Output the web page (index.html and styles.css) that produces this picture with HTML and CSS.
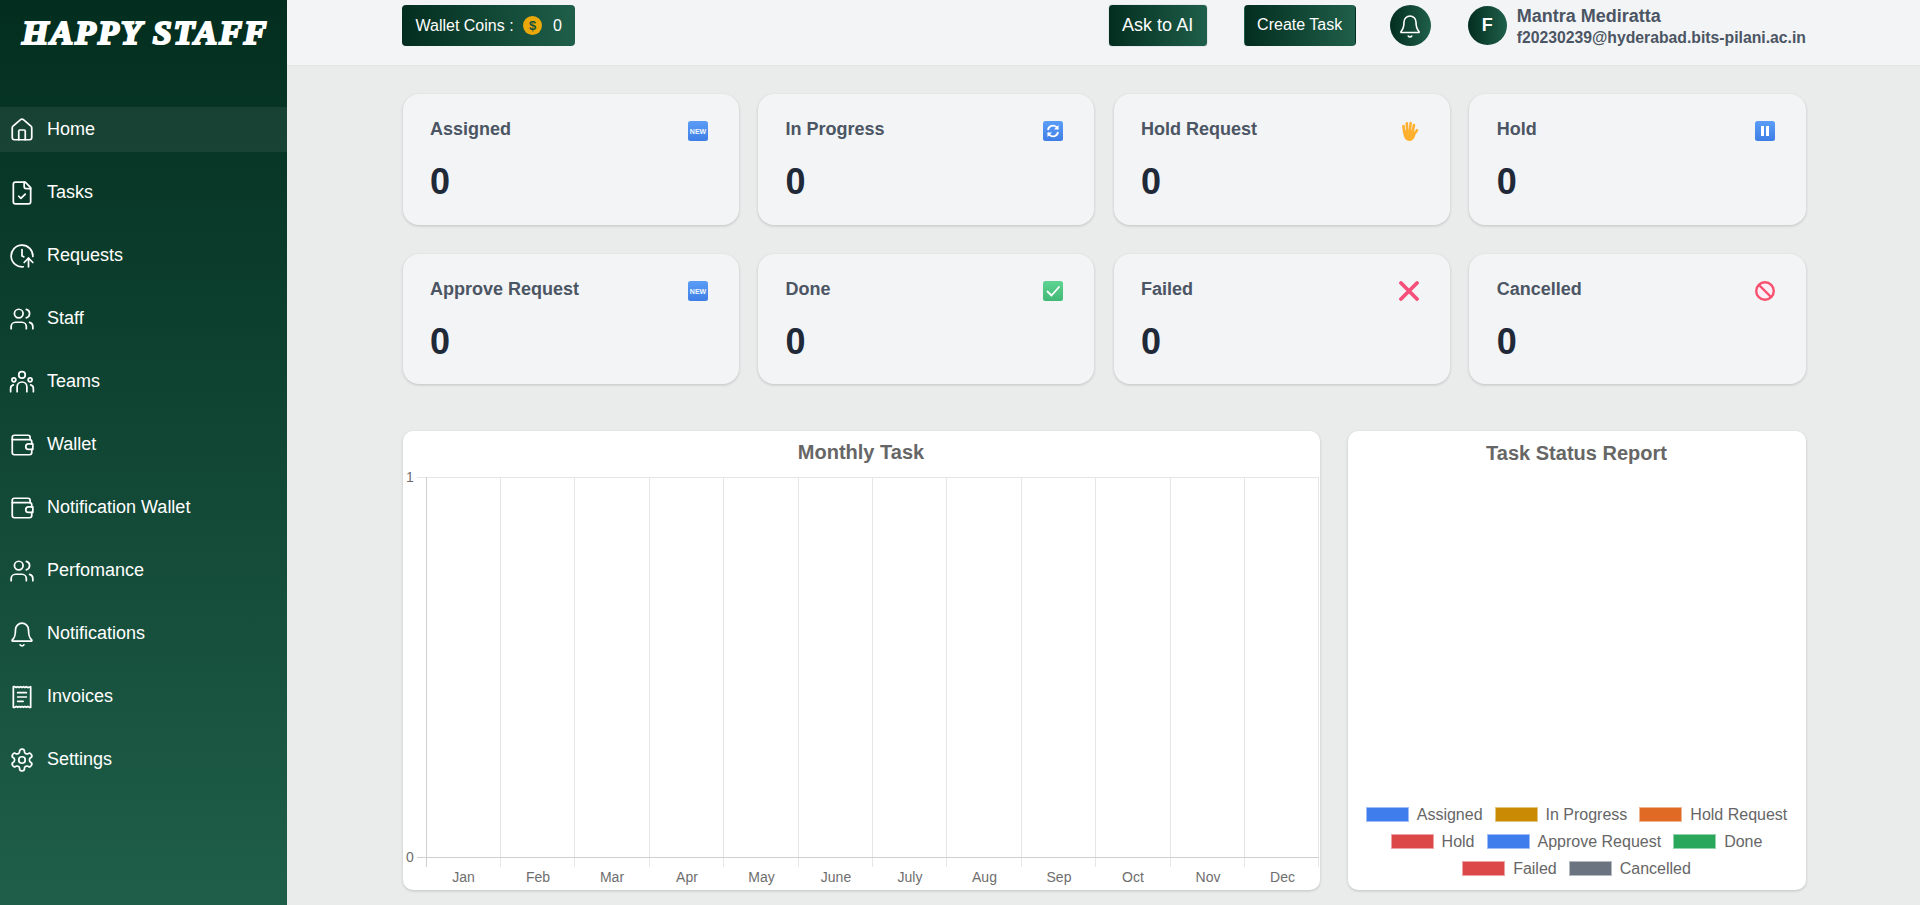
FILE: index.html
```html
<!DOCTYPE html>
<html lang="en">
<head>
<meta charset="utf-8">
<title>Happy Staff</title>
<link rel="stylesheet" href="styles.css">
</head>
<body>
<svg class="defs" width="0" height="0" aria-hidden="true">
  <defs>
    <linearGradient id="blue-grad" x1="0" y1="0" x2="0" y2="1"><stop offset="0" stop-color="#5a9df6"/><stop offset="1" stop-color="#3f7ee6"/></linearGradient>
    <linearGradient id="green-grad" x1="0" y1="0" x2="0" y2="1"><stop offset="0" stop-color="#5ed492"/><stop offset="1" stop-color="#42b877"/></linearGradient>
  </defs>
</svg>
<div class="app">
  <aside class="sidebar">
    <div class="logo">HAPPY STAFF</div>
    <nav class="nav">
      <a class="nav-item active"><svg class="nav-icon" viewBox="0 0 24 24"><path d="M3 10a2 2 0 0 1 .709-1.528l7-5.999a2 2 0 0 1 2.582 0l7 5.999A2 2 0 0 1 21 10v9a2 2 0 0 1-2 2H5a2 2 0 0 1-2-2z"/><path d="M15 21v-8a1 1 0 0 0-1-1h-4a1 1 0 0 0-1 1v8"/></svg>Home</a>
      <a class="nav-item"><svg class="nav-icon" viewBox="0 0 24 24"><path d="M15 2H6a2 2 0 0 0-2 2v16a2 2 0 0 0 2 2h12a2 2 0 0 0 2-2V7Z"/><path d="M14 2v4a2 2 0 0 0 2 2h4"/><path d="m9 15 2 2 4-4"/></svg>Tasks</a>
      <a class="nav-item"><svg class="nav-icon" viewBox="0 0 24 24"><path d="M13.228 21.925A10 10 0 1 1 21.994 12.338"/><path d="M12 6v6l1.562.781"/><path d="m14 18 4-4 4 4"/><path d="M18 22v-8"/></svg>Requests</a>
      <a class="nav-item"><svg class="nav-icon" viewBox="0 0 24 24"><path d="M16 21v-2a4 4 0 0 0-4-4H6a4 4 0 0 0-4 4v2"/><circle cx="9" cy="7" r="4"/><path d="M22 21v-2a4 4 0 0 0-3-3.87"/><path d="M16 3.13a4 4 0 0 1 0 7.75"/></svg>Staff</a>
      <a class="nav-item"><svg class="nav-icon" viewBox="0 0 24 24"><circle cx="12" cy="5.500" r="3"/><circle cx="4.500" cy="10" r="1.800"/><circle cx="19.500" cy="10" r="1.800"/><path d="M7.500 21v-4.500a4.500 4.500 0 0 1 9 0V21"/><path d="M1.500 21v-3a3.500 3.500 0 0 1 2.500-3.300"/><path d="M22.500 21v-3a3.500 3.500 0 0 0-2.500-3.300"/></svg>Teams</a>
      <a class="nav-item"><svg class="nav-icon" viewBox="0 0 24 24"><path d="M19.500 7V5a2 2 0 0 0-2-2H5a2 2 0 0 0-2 2v14a2 2 0 0 0 2 2h14a2 2 0 0 0 2-2v-3"/><path d="M3 7h16a2 2 0 0 1 2 2v2"/><path d="M22 11h-4a2.500 2.500 0 0 0 0 5h4z"/></svg>Wallet</a>
      <a class="nav-item"><svg class="nav-icon" viewBox="0 0 24 24"><path d="M19.500 7V5a2 2 0 0 0-2-2H5a2 2 0 0 0-2 2v14a2 2 0 0 0 2 2h14a2 2 0 0 0 2-2v-3"/><path d="M3 7h16a2 2 0 0 1 2 2v2"/><path d="M22 11h-4a2.500 2.500 0 0 0 0 5h4z"/></svg>Notification Wallet</a>
      <a class="nav-item"><svg class="nav-icon" viewBox="0 0 24 24"><path d="M16 21v-2a4 4 0 0 0-4-4H6a4 4 0 0 0-4 4v2"/><circle cx="9" cy="7" r="4"/><path d="M22 21v-2a4 4 0 0 0-3-3.87"/><path d="M16 3.13a4 4 0 0 1 0 7.75"/></svg>Perfomance</a>
      <a class="nav-item"><svg class="nav-icon" viewBox="0 0 24 24"><path d="M6 8a6 6 0 0 1 12 0c0 6 1 7.500 3 9.500a.6.6 0 0 1-.4 1H3.400a.6.6 0 0 1-.4-1C5 15.500 6 14 6 8"/><path d="M10.300 22a2 2 0 0 0 3.400 0"/></svg>Notifications</a>
      <a class="nav-item"><svg class="nav-icon" viewBox="0 0 24 24"><path d="M4 2.500h1.300l1.300.8 1.300-.8 1.400.8 1.300-.8 1.400.8 1.300-.8 1.400.8 1.300-.8 1.300.8L20 2.500v19h-1.300l-1.300-.8-1.300.8-1.400-.8-1.300.8-1.400-.8-1.300.8-1.400-.8-1.300.8-1.300-.8-1.300.8H4z"/><path d="M8 8h8"/><path d="M8 12h8"/><path d="M8 16h5"/></svg>Invoices</a>
      <a class="nav-item"><svg class="nav-icon" viewBox="0 0 24 24"><path d="M12.220 2h-.44a2 2 0 0 0-2 2v.18a2 2 0 0 1-1 1.730l-.43.250a2 2 0 0 1-2 0l-.15-.08a2 2 0 0 0-2.730.730l-.22.380a2 2 0 0 0 .730 2.730l.15.100a2 2 0 0 1 1 1.720v.510a2 2 0 0 1-1 1.740l-.15.090a2 2 0 0 0-.730 2.730l.22.380a2 2 0 0 0 2.730.730l.15-.08a2 2 0 0 1 2 0l.43.250a2 2 0 0 1 1 1.730V20a2 2 0 0 0 2 2h.44a2 2 0 0 0 2-2v-.18a2 2 0 0 1 1-1.730l.43-.25a2 2 0 0 1 2 0l.15.080a2 2 0 0 0 2.730-.730l.22-.39a2 2 0 0 0-.73-2.730l-.15-.08a2 2 0 0 1-1-1.740v-.5a2 2 0 0 1 1-1.740l.15-.09a2 2 0 0 0 .73-2.730l-.22-.38a2 2 0 0 0-2.730-.73l-.15.08a2 2 0 0 1-2 0l-.43-.25a2 2 0 0 1-1-1.730V4a2 2 0 0 0-2-2z"/><circle cx="12" cy="12" r="3"/></svg>Settings</a>
    </nav>
  </aside>

  <div class="main">
    <header class="topbar">
      <div class="wallet-btn">Wallet Coins :<span class="coin">$</span><span>0</span></div>
      <div class="top-actions">
        <button class="btn btn-ai">Ask to AI</button>
        <button class="btn btn-task">Create Task</button>
        <span class="bell"><svg viewBox="0 0 24 24"><path d="M6 8a6 6 0 0 1 12 0c0 6 1 7.500 3 9.500a.6.6 0 0 1-.4 1H3.400a.6.6 0 0 1-.4-1C5 15.500 6 14 6 8"/><path d="M10.300 22a2 2 0 0 0 3.400 0"/></svg></span>
        <div class="user">
          <span class="avatar">F</span>
          <div class="user-text">
            <div class="user-name">Mantra Mediratta</div>
            <div class="user-email">f20230239@hyderabad.bits-pilani.ac.in</div>
          </div>
        </div>
      </div>
    </header>

    <main class="content">
      <section class="stats">
        <div class="card"><div class="card-head"><span class="card-label">Assigned</span><svg class="emoji" viewBox="0 0 20 20"><rect width="20" height="20" rx="2.500" class="blue-box"/><text x="10" y="12.600" class="new-text">NEW</text></svg></div><div class="card-value">0</div></div>
        <div class="card"><div class="card-head"><span class="card-label">In Progress</span><svg class="emoji" viewBox="0 0 20 20"><rect width="20" height="20" rx="2.500" class="blue-box"/><path d="M5 9a5 5 0 0 1 8.500-2.800L15 8M15 11a5 5 0 0 1-8.500 2.800L5 12" class="glyph-line"/><path d="M15.500 4v4.500H11zM4.500 16v-4.500H9z" class="glyph-fill"/></svg></div><div class="card-value">0</div></div>
        <div class="card"><div class="card-head"><span class="card-label">Hold Request</span><svg class="emoji" viewBox="0 0 20 20"><path d="M5.300 11.500 4.400 5M8.200 9.500 7.800 2.400M11 9.500 11.600 2M13.700 10.500 15 4M15 13.500 18 9.200" class="hand-line"/><path d="M4.200 10.500C5 9 14 8.500 15.600 11L16.300 14C15.500 17.500 13.500 20 10.300 20 6.500 20 4.500 16.500 4.200 10.500Z" class="hand"/></svg></div><div class="card-value">0</div></div>
        <div class="card"><div class="card-head"><span class="card-label">Hold</span><svg class="emoji" viewBox="0 0 20 20"><rect width="20" height="20" rx="2.500" class="blue-box"/><rect x="6" y="5" width="3" height="10" class="glyph-fill"/><rect x="11" y="5" width="3" height="10" class="glyph-fill"/></svg></div><div class="card-value">0</div></div>
        <div class="card"><div class="card-head"><span class="card-label">Approve Request</span><svg class="emoji" viewBox="0 0 20 20"><rect width="20" height="20" rx="2.500" class="blue-box"/><text x="10" y="12.600" class="new-text">NEW</text></svg></div><div class="card-value">0</div></div>
        <div class="card"><div class="card-head"><span class="card-label">Done</span><svg class="emoji" viewBox="0 0 20 20"><rect width="20" height="20" rx="2.500" class="green-box"/><path d="M4.500 10.500 8.500 14.500 16 6" class="check"/></svg></div><div class="card-value">0</div></div>
        <div class="card"><div class="card-head"><span class="card-label">Failed</span><svg class="emoji" viewBox="0 0 20 20"><path d="M2 2 18 18M18 2 2 18" class="cross"/></svg></div><div class="card-value">0</div></div>
        <div class="card"><div class="card-head"><span class="card-label">Cancelled</span><svg class="emoji" viewBox="0 0 20 20"><circle cx="10" cy="10" r="8.800" class="ban"/><path d="M4 4 16 16" class="ban-line"/></svg></div><div class="card-value">0</div></div>
      </section>

      <section class="charts">
        <div class="panel panel-line">
          <svg class="chart" viewBox="0 0 917 459">
            <text x="458" y="28" class="chart-title">Monthly Task</text>
            <g class="grid">
              <path d="M14 46.500H916"/>
              <path d="M97.500 46V436M171.500 46V436M246.500 46V436M320.500 46V436M395.500 46V436M469.500 46V436M543.500 46V436M618.500 46V436M692.500 46V436M767.500 46V436M841.500 46V436M915.500 46V436"/>
            </g>
            <g class="axis">
              <path d="M23.500 46V436"/>
              <path d="M14 426.500H916"/>
            </g>
            <g class="tick-y">
              <text x="7" y="51">1</text>
              <text x="7" y="431">0</text>
            </g>
            <g class="tick-x">
              <text x="60.500" y="451">Jan</text><text x="135" y="451">Feb</text><text x="209" y="451">Mar</text><text x="284" y="451">Apr</text><text x="358.500" y="451">May</text><text x="433" y="451">June</text><text x="507" y="451">July</text><text x="581.500" y="451">Aug</text><text x="656" y="451">Sep</text><text x="730" y="451">Oct</text><text x="805" y="451">Nov</text><text x="879.500" y="451">Dec</text>
            </g>
          </svg>
        </div>
        <div class="panel panel-pie">
          <div class="pie-title">Task Status Report</div>
          <ul class="legend">
            <li class="legend-item"><i class="swatch s-blue"></i>Assigned</li>
            <li class="legend-item"><i class="swatch s-yellow"></i>In Progress</li>
            <li class="legend-item"><i class="swatch s-orange"></i>Hold Request</li>
            <li class="legend-item"><i class="swatch s-red"></i>Hold</li>
            <li class="legend-item"><i class="swatch s-blue"></i>Approve Request</li>
            <li class="legend-item"><i class="swatch s-green"></i>Done</li>
            <li class="legend-item"><i class="swatch s-red"></i>Failed</li>
            <li class="legend-item"><i class="swatch s-gray"></i>Cancelled</li>
          </ul>
        </div>
      </section>
    </main>
  </div>
</div>
</body>
</html>
```

FILE: styles.css
```css
* { box-sizing: border-box; }
html, body { margin: 0; height: 100%; }
body {
  font-family: "Liberation Sans", Arial, sans-serif;
  background: #e9eceb;
  color: #1f2937;
  overflow: hidden;
}
.defs { display: block; height: 0; }
.app { display: flex; height: 905px; }

/* Sidebar */
.sidebar {
  width: 287px;
  flex: none;
  background: linear-gradient(180deg, #032e1f 0%, #1f5f4a 100%);
  color: #fff;
}
.logo {
  height: 107px;
  padding: 13px 0 0 22px;
  font-family: "Liberation Serif", serif;
  font-weight: 700;
  font-style: italic;
  font-size: 34px;
  line-height: 40px;
  letter-spacing: 2px;
  white-space: nowrap;
  color: #fff;
  -webkit-text-stroke: 2.2px #fff;
  text-shadow: 1px 1px 0 #7fae97;
}
.nav { display: flex; flex-direction: column; gap: 18px; }
.nav-item {
  display: flex;
  align-items: center;
  gap: 12.5px;
  height: 45px;
  padding-left: 8.5px;
  font-size: 18px;
  color: #fff;
}
.nav-item.active { background: rgba(255, 255, 255, .07); }
.nav-icon {
  width: 26px;
  height: 26px;
  flex: none;
  fill: none;
  stroke: #fff;
  stroke-width: 1.6;
  stroke-linecap: round;
  stroke-linejoin: round;
}

/* Top bar */
.main { flex: 1; min-width: 0; display: flex; flex-direction: column; }
.topbar {
  height: 66px;
  flex: none;
  display: flex;
  justify-content: space-between;
  padding: 5px 114px 0 115px;
  background: #f3f4f6;
  border-bottom: 1px solid #e2e5e4;
}
.wallet-btn {
  display: flex;
  align-items: center;
  width: 173px;
  height: 41px;
  padding-left: 13.5px;
  border-radius: 4px;
  background: linear-gradient(90deg, #032e1f, #1f5f4a);
  color: #fff;
  font-size: 16px;
}
.coin {
  width: 19px;
  height: 19px;
  margin: 0 11px 0 9.5px;
  border-radius: 50%;
  background: #eaa908;
  color: #14523c;
  font-size: 13px;
  font-weight: 700;
  line-height: 19px;
  text-align: center;
}
.top-actions { display: flex; align-items: flex-start; }
.btn {
  height: 41px;
  border: 1px solid #e5e7eb;
  border-radius: 4px;
  background: linear-gradient(90deg, #032e1f, #1f5f4a);
  color: #fff;
  font-family: inherit;
  padding: 0;
}
.btn-ai { width: 100px; height: 43px; margin-top: -1px; font-size: 18px; }
.btn-task { width: 112px; margin-left: 36px; padding-bottom: 2px; font-size: 16px; border-color: transparent; }
.bell {
  width: 41px;
  height: 41px;
  margin-left: 34px;
  border-radius: 50%;
  background: linear-gradient(90deg, #032e1f, #1f5f4a);
  display: flex;
  align-items: center;
  justify-content: center;
}
.bell svg {
  width: 24px;
  height: 24px;
  fill: none;
  stroke: #fff;
  stroke-width: 1.6;
  stroke-linecap: round;
  stroke-linejoin: round;
}
.user { display: flex; align-items: flex-start; gap: 10px; margin-left: 37px; }
.avatar {
  width: 39px;
  height: 39px;
  margin-top: 1px;
  border-radius: 50%;
  background: linear-gradient(90deg, #032e1f, #1f5f4a);
  color: #fff;
  font-size: 18px;
  font-weight: 700;
  line-height: 39px;
  text-align: center;
}
.user-text { color: #4b5563; font-weight: 700; margin-top: 1px; }
.user-name { font-size: 18px; line-height: 20px; }
.user-email { font-size: 15.75px; line-height: 24px; white-space: nowrap; }

/* Content */
.content { flex: 1; min-height: 0; padding: 28px 114.5px 0 115.5px; }
.stats {
  display: grid;
  grid-template-columns: repeat(4, 1fr);
  gap: 29px 19.2px;
}
.card {
  height: 130.5px;
  padding: 25px 31px 0 27.5px;
  border-radius: 16px;
  background: #f3f4f6;
  box-shadow: 0 1px 3px rgba(0, 0, 0, .18);
}
.card-head { display: flex; justify-content: space-between; align-items: flex-start; height: 35px; }
.card-label { font-size: 18px; line-height: 20px; font-weight: 700; color: #4b5563; }
.emoji { width: 20px; height: 20px; margin-top: 2px; flex: none; }
.blue-box { fill: url(#blue-grad); }
.green-box { fill: url(#green-grad); }
.new-text {
  font-family: "Liberation Sans", sans-serif;
  font-size: 7px;
  font-weight: 700;
  fill: #f4f8ff;
  text-anchor: middle;
}
.glyph-fill { fill: #fff; }
.glyph-line { fill: none; stroke: #fff; stroke-width: 1.800; }
.check { fill: none; stroke: #fff; stroke-width: 1.800; stroke-linecap: round; stroke-linejoin: round; }
.hand { fill: #ffb02e; }
.hand-line { fill: none; stroke: #ffb02e; stroke-width: 2.600; stroke-linecap: round; }
.cross { fill: none; stroke: #f6507a; stroke-width: 3.800; stroke-linecap: round; }
.ban { fill: #fceef6; stroke: #f8506f; stroke-width: 2.400; }
.ban-line { stroke: #f8506f; stroke-width: 2.400; }
.card-value { margin-top: 8px; font-size: 36px; line-height: 40px; font-weight: 700; color: #1f2937; }

/* Charts */
.charts {
  display: grid;
  grid-template-columns: 917px 458px;
  justify-content: space-between;
  margin-top: 47px;
}
.panel {
  height: 459px;
  border-radius: 10px;
  background: #fff;
  box-shadow: 0 1px 3px rgba(0, 0, 0, .18);
}
.chart { display: block; width: 100%; height: 100%; }
.chart-title, .pie-title { font-size: 20px; font-weight: 700; fill: #666; color: #666; }
.chart-title { text-anchor: middle; }
.grid path { fill: none; stroke: #e6e6e6; stroke-width: 1; }
.axis path { fill: none; stroke: #cfcfcf; stroke-width: 1; }
.tick-y text { font-size: 14px; fill: #6e6e6e; text-anchor: middle; }
.tick-x text { font-size: 14px; fill: #6e6e6e; text-anchor: middle; }

.panel-pie {
  display: flex;
  flex-direction: column;
  justify-content: space-between;
  padding: 10px 0 8px;
}
.pie-title { text-align: center; line-height: 24px; }
.legend {
  display: flex;
  flex-wrap: wrap;
  justify-content: center;
  margin: 0;
  padding: 0;
  list-style: none;
}
.legend-item {
  display: flex;
  align-items: center;
  height: 27px;
  margin: 0 6px;
  font-size: 16px;
  color: #666;
  white-space: nowrap;
}
.swatch { width: 43px; height: 15px; margin-right: 8px; border: 1px solid rgba(255, 255, 255, .5); }
.s-blue { background: #3f7cec; }
.s-yellow { background: #ca8a04; }
.s-orange { background: #e06a24; }
.s-red { background: #dc4848; }
.s-green { background: #2aa75a; }
.s-gray { background: #6b7280; }
```
